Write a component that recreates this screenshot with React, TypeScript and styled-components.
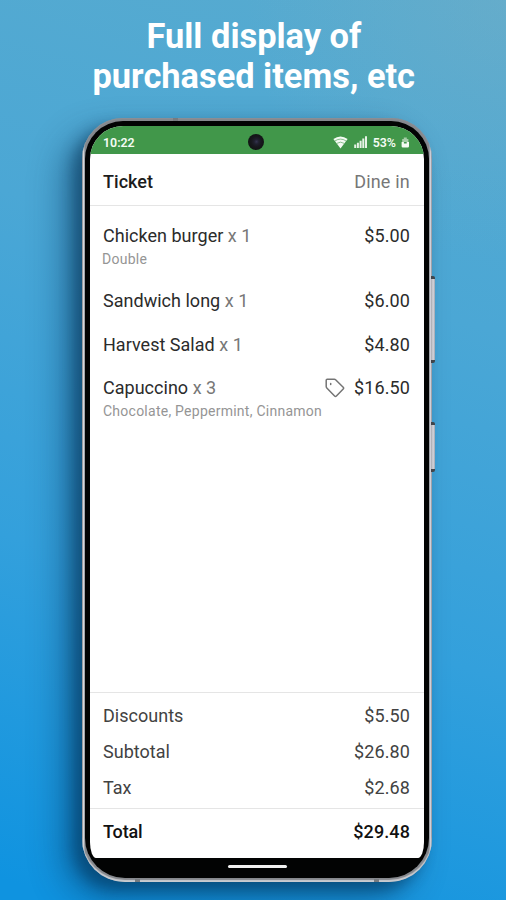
import React from "react";
import styled, { createGlobalStyle, css } from "styled-components";

const GlobalStyle = createGlobalStyle`
  * { box-sizing: border-box; }
  body { margin: 0; font-family: Roboto, sans-serif; }
`;

const Page = styled.main`
  width: 506px;
  height: 900px;
  overflow: hidden;
  display: flex;
  flex-direction: column;
  background:
    radial-gradient(circle at 100% 0%, rgba(125, 175, 195, 0.35), transparent 260px),
    linear-gradient(196deg, #58abcf 0%, #4ba7d5 32%, #33a0dc 65%, #0f93e0 98%);
`;

const Headline = styled.h1`
  margin: 0;
  padding: 16px 0 0 1px;
  height: 118px;
  color: #fff;
  font-size: 34.4px;
  line-height: 40px;
  font-weight: 700;
  text-align: center;
`;

const HeadlineLine = styled.span<{ $width: number }>`
  display: block;
  width: ${(p) => p.$width}px;
  margin: 0 auto;
  white-space: nowrap;
`;

const Phone = styled.section`
  position: relative;
  width: 350px;
  height: 764px;
  margin-left: 82px;
  padding: 3px 3px 4px;
  border-radius: 41px 41px 43px 43px;
  background: linear-gradient(90deg, #777b80 0, #d8d8dc 1.5px, #85888d 3px, #85888d 347px, #d0cfd8 348.5px, #83878f 350px);
  box-shadow:
    inset 0 -2px 1px #c9cbd0,
    inset 0 1px 1px #8b8f96,
    -9px 8px 14px rgba(0, 40, 75, 0.42),
    -19px 16px 34px rgba(0, 45, 85, 0.46);
`;

const Bezel = styled.div`
  height: 757px;
  padding: 5px 5px 20px 5px;
  border-radius: 38px 38px 40px 40px;
  background: #020303;
`;

const Screen = styled.div`
  height: 732px;
  display: flex;
  flex-direction: column;
  overflow: hidden;
  border-radius: 33px 33px 6px 6px / 33px 33px 16px 16px;
  background: #fff;
`;

const StatusBar = styled.header`
  flex: none;
  height: 28px;
  padding: 4px 14px 0 13px;
  display: flex;
  align-items: center;
  justify-content: space-between;
  background: #41974a;
  color: #f4fbf3;
  font-size: 12.4px;
  font-weight: 600;
`;

const Clock = styled.span`
  letter-spacing: 0;
`;

const StatusIcons = styled.div`
  display: flex;
  align-items: center;
`;

const Percent = styled.span`
  margin: 0 5px 0 6px;
`;

const Camera = styled.div`
  position: absolute;
  left: 166px;
  top: 16px;
  width: 16px;
  height: 16px;
  border-radius: 50%;
  background: radial-gradient(circle at 53% 48%, #34344f 0, #20202e 20%, #17171c 45%, #111514 70%);
`;

const TicketHeader = styled.div`
  flex: none;
  height: 52px;
  padding: 0 14px 0 13px;
  display: flex;
  align-items: center;
  justify-content: space-between;
  border-bottom: 1px solid #e5e5e5;
`;

const Title = styled.h2`
  margin: 3px 0 0;
  color: #1c1c1c;
  font-size: 18px;
  font-weight: 500;
  letter-spacing: 0.05px;
`;

const Mode = styled.span`
  margin-top: 3px;
  color: #777;
  font-size: 18px;
  letter-spacing: 0.2px;
`;

const Items = styled.ul`
  flex: 1;
  margin: 0;
  padding: 18px 14px 0 13px;
  list-style: none;
`;

const Item = styled.li<{ $tall: boolean }>`
  height: ${(p) => (p.$tall ? 65 : 43.5)}px;
`;

const Row = styled.div<{ $tone?: "muted" | "strong" }>`
  height: 24px;
  display: flex;
  align-items: center;
  justify-content: space-between;
  color: #2b2b2b;
  font-size: 18px;
  line-height: 24px;
  letter-spacing: 0.02px;
  ${(p) => p.$tone === "muted" && css`color: #424242;`}
  ${(p) => p.$tone === "strong" && css`
    color: #111;
    font-weight: 500;
    letter-spacing: -0.15px;
  `}
`;

const Quantity = styled.span`
  color: #777;
`;

const Price = styled.span`
  display: flex;
  align-items: center;
  gap: 9px;
  letter-spacing: 0.1px;
`;

const Note = styled.div<{ $shift: number }>`
  margin-left: ${(p) => p.$shift}px;
  color: #959595;
  font-size: 14px;
  line-height: 22px;
  letter-spacing: 0.25px;
  white-space: nowrap;
`;

const Totals = styled.div`
  flex: none;
  height: 116px;
  padding: 11px 14px 0 13px;
  display: flex;
  flex-direction: column;
  gap: 12px;
  border-top: 1px solid #e5e5e5;
`;

const GrandTotal = styled.div`
  flex: none;
  height: 50px;
  padding: 11px 14px 0 13px;
  border-top: 1px solid #e5e5e5;
`;

const HomeIndicator = styled.div`
  width: 59px;
  height: 3px;
  margin: 7px auto 0;
  border-radius: 2px;
  background: #f1f1f1;
`;

const SideButton = styled.div<{ $top: number; $height: number }>`
  position: absolute;
  left: 349px;
  top: ${(p) => p.$top}px;
  width: 4px;
  height: ${(p) => p.$height}px;
  border: solid #40454b;
  border-width: 3px 0;
  border-radius: 0 2px 2px 0;
  background: linear-gradient(90deg, #a5a8af, #d6d5dc 55%, #9da5af);
`;

const AntennaMark = styled.div<{ $left: number; $top: number }>`
  position: absolute;
  left: ${(p) => p.$left}px;
  top: ${(p) => p.$top}px;
  width: 5px;
  height: 3px;
  background: #777b80;
`;

const WifiIcon = () => (
  <svg width="15" height="13" viewBox="0 0 15 13">
    <path d="M.4 3.1Q7.5-2 14.6 3.1L7.5 12.4z" fill="#f4fbf3" />
    <path d="M2 4.9Q7.5 1.3 13 4.9M4 7.3Q7.5 5 11 7.3" fill="none" stroke="#41974a" strokeWidth=".6" />
  </svg>
);

const SignalIcon = () => (
  <svg width="13" height="12" viewBox="0 0 13 12">
    <path d="M.2 8.5h2V12h-2zM2.9 6.7h2V12h-2zM5.6 4.7h2V12h-2zM8.3 2.5h2V12h-2zM11 .3h2V12h-2z" fill="#e7f3e6" />
  </svg>
);

const BatteryIcon = () => (
  <svg width="9" height="11" viewBox="0 0 9 11">
    <path d="M2.8.5h3V2h1.6v3H1.2V2h1.6z" fill="#a5cda7" />
    <path d="M.6 5h2.3v1.5h2.8V5h2.3v4.2q0 1.3-1.3 1.3H1.9Q.6 10.5.6 9.2z" fill="#f4fbf3" />
  </svg>
);

const TagIcon = () => (
  <svg width="20" height="20" viewBox="0 0 20 20" fill="none" stroke="#747474" strokeWidth="1.5">
    <path d="M2.2 1.2h7.2q.7 0 1.2.5l7.6 7.5q.9.9 0 1.8l-6.8 7q-.9.9-1.8 0l-7.8-8q-.6-.6-.6-1.4V2.3q0-1.1 1-1.1z" />
    <ellipse cx="5.7" cy="6" rx=".8" ry="1.2" fill="#747474" stroke="none" />
  </svg>
);

const StatusGap = styled.span`
  width: 6px;
`;

type TicketItem = {
  name: string;
  count: number;
  price: string;
  note?: string;
  shift?: number;
  tagged?: boolean;
};

const items: TicketItem[] = [
  { name: "Chicken burger", count: 1, price: "$5.00", note: "Double", shift: -1 },
  { name: "Sandwich long", count: 1, price: "$6.00" },
  { name: "Harvest Salad", count: 1, price: "$4.80" },
  { name: "Capuccino", count: 3, price: "$16.50", note: "Chocolate, Peppermint, Cinnamon", tagged: true },
];

export default function App() {
  return (
    <>
      <GlobalStyle />
      <Page>
        <Headline>
          <HeadlineLine $width={214}>Full display of</HeadlineLine>
          <HeadlineLine $width={322}>purchased items, etc</HeadlineLine>
        </Headline>
        <Phone>
          <Bezel>
            <Screen>
              <StatusBar>
                <Clock>10:22</Clock>
                <StatusIcons>
                  <WifiIcon />
                  <StatusGap />
                  <SignalIcon />
                  <Percent>53%</Percent>
                  <BatteryIcon />
                </StatusIcons>
              </StatusBar>
              <TicketHeader>
                <Title>Ticket</Title>
                <Mode>Dine in</Mode>
              </TicketHeader>
              <Items>
                {items.map((item) => (
                  <Item key={item.name} $tall={!!item.note}>
                    <Row>
                      <span>
                        {item.name} <Quantity>x {item.count}</Quantity>
                      </span>
                      <Price>
                        {item.tagged && <TagIcon />}
                        {item.price}
                      </Price>
                    </Row>
                    {item.note && <Note $shift={item.shift ?? 0}>{item.note}</Note>}
                  </Item>
                ))}
              </Items>
              <Totals>
                <Row $tone="muted"><span>Discounts</span><Price>$5.50</Price></Row>
                <Row $tone="muted"><span>Subtotal</span><Price>$26.80</Price></Row>
                <Row $tone="muted"><span>Tax</span><Price>$2.68</Price></Row>
              </Totals>
              <GrandTotal>
                <Row $tone="strong"><span>Total</span><Price>$29.48</Price></Row>
              </GrandTotal>
            </Screen>
            <HomeIndicator />
          </Bezel>
          <Camera />
          <AntennaMark $left={91} $top={0} />
          <AntennaMark $left={53} $top={761} />
          <AntennaMark $left={292} $top={761} />
          <SideButton $top={158} $height={87} />
          <SideButton $top={304} $height={50} />
        </Phone>
      </Page>
    </>
  );
}
